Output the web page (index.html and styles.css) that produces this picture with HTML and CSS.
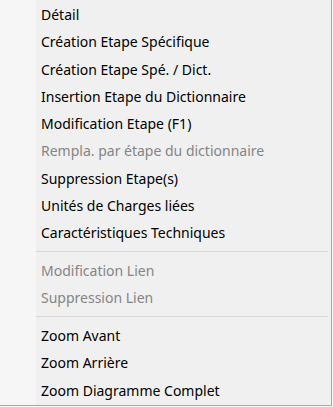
FILE: index.html
```html
<!DOCTYPE html>
<html lang="fr">
<head>
  <meta charset="UTF-8" />
  <title>Menu contextuel</title>
  <link rel="stylesheet" href="styles.css">
</head>
<body>
  <ul class="menu">
    <li class="item">Détail</li>
    <li class="item">Création Etape Spécifique</li>
    <li class="item">Création Etape Spé. / Dict.</li>
    <li class="item">Insertion Etape du Dictionnaire</li>
    <li class="item">Modification Etape (F1)</li>
    <li class="item disabled">Rempla. par étape du dictionnaire</li>
    <li class="item">Suppression Etape(s)</li>
    <li class="item">Unités de Charges liées</li>
    <li class="item">Caractéristiques Techniques</li>
    <li class="separator"></li>
    <li class="item disabled">Modification Lien</li>
    <li class="item disabled">Suppression Lien</li>
    <li class="separator"></li>
    <li class="item">Zoom Avant</li>
    <li class="item">Zoom Arrière</li>
    <li class="item">Zoom Diagramme Complet</li>
  </ul>
</body>
</html>
```
FILE: styles.css
```css
* {
  box-sizing: border-box;
  margin: 0;
  padding: 0;
}

body {
  background: #f7f7f7;
  width: 333px;
  height: 407px;
  overflow: hidden;
}

/* menu with the lighter icon gutter on the left */
.menu {
  list-style: none;
  width: 332px;
  height: 406px;
  padding-top: 1px;
  background: linear-gradient(to right, #f6f6f6 36px, #f0f0f0 36px);
  border-right: 1px solid #a9a9a9;
  border-bottom: 1px solid #a9a9a9;
  font-family: "Noto Sans", "Open Sans", sans-serif;
  font-size: 14px;
  color: #000;
}

.item {
  height: 27.3px;
  line-height: 27.3px;
  padding-left: 41px;
  white-space: nowrap;
  cursor: default;
}

.item.disabled {
  color: #858585;
}

.separator {
  height: 10.4px;
  display: flex;
  align-items: center;
  margin: 0 3px 0 36px;
}

.separator::before {
  content: "";
  flex: 1;
  height: 1px;
  background: #d7d7d7;
}
```
